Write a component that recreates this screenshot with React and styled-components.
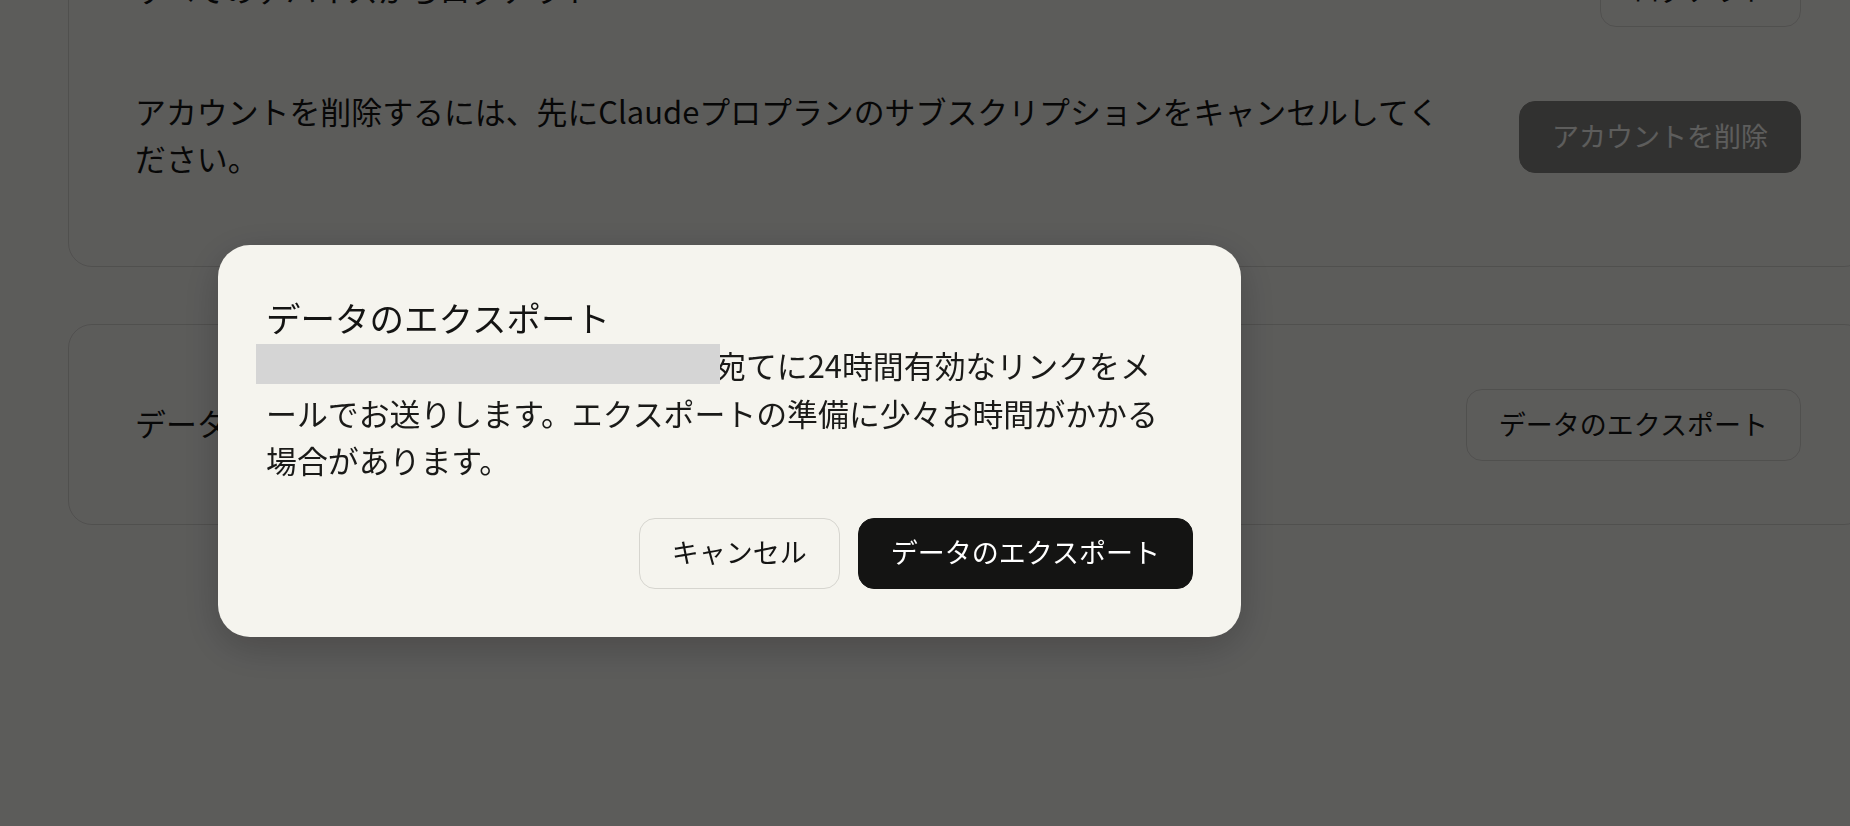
import React from 'react'
import styled, { createGlobalStyle } from 'styled-components'

const GlobalStyle = createGlobalStyle`
    * { box-sizing: border-box; }
    html, body {
        margin: 0;
        padding: 0;
        height: 100%;
        overflow: hidden;
        background: #faf9f5;
    }
    body {
        font-family: "Noto Sans CJK JP", "Noto Sans", sans-serif;
        color: #141413;
    }
`;

// settings page, scrolled down a little
const Page = styled.div`
    width: 1800px;
    margin: -110px 0 0 68px;
    display: flex;
    flex-direction: column;
    gap: 57px;
`;

const Card = styled.section`
    border: 1px solid rgba(31, 30, 29, 0.15);
    border-radius: 24px;
    padding: ${p => p.$pad};
    display: flex;
    flex-direction: column;
    gap: 60px;
`;

const Row = styled.div`
    display: flex;
    align-items: center;
    justify-content: space-between;
    gap: 64px;
    min-height: 72px;
`;

const Label = styled.p`
    margin: 0;
    padding-bottom: 5px;
    font-size: 30.9px;
    line-height: 47px;
    white-space: nowrap;
`;

const OutlineButton = styled.button`
    flex-shrink: 0;
    height: ${p => p.$h || 72}px;
    padding: 0 32px 3px;
    border: 1px solid ${p => p.$border || 'rgba(31, 30, 29, 0.15)'};
    border-radius: 16px;
    background: transparent;
    font-family: inherit;
    font-size: 27px;
    color: #141413;
    white-space: nowrap;
`;

const DarkButton = styled(OutlineButton)`
    border-color: #141413;
    background: #141413;
    color: #ffffff;
    opacity: ${p => (p.disabled ? 0.5 : 1)};
`;

const Backdrop = styled.div`
    position: fixed;
    inset: 0;
    background: rgba(0, 0, 0, 0.63);
    padding: 245px 0 0 218px;
`;

const Dialog = styled.div`
    width: 1023px;
    padding: 48px;
    background: #f5f4ee;
    border-radius: 32px;
    box-shadow: 0 10px 40px rgba(0, 0, 0, 0.22);
`;

const Title = styled.h2`
    margin: 0;
    font-size: 34.5px;
    line-height: 49px;
    font-weight: 400;
    color: #141413;
`;

const Body = styled.p`
    margin: -1px 0 0;
    font-size: 30.9px;
    line-height: 47.5px;
    color: #1a1a18;
    white-space: nowrap;
`;

const Redacted = styled.span`
    position: relative;
    z-index: 1;
    display: inline-block;
    width: 464px;
    height: 40px;
    margin: -14px -5px 0 -10px;
    vertical-align: -6px;
    background: #d5d5d5;
`;

const Actions = styled.div`
    display: flex;
    justify-content: flex-end;
    gap: 18px;
    margin-top: 34px;
`;

export default function App() {
    return (
        <>
            <GlobalStyle />
            <Page>
                <Card $pad="64px 66px 80px">
                    <Row>
                        <Label>すべてのデバイスからログアウト</Label>
                        <OutlineButton>ログアウト</OutlineButton>
                    </Row>
                    <Row>
                        <Label>
                            アカウントを削除するには、先にClaudeプロプランのサブスクリプションをキャンセルしてく
                            <br />
                            ださい。
                        </Label>
                        <DarkButton disabled>アカウントを削除</DarkButton>
                    </Row>
                </Card>
                <Card $pad="64px 66px 63px">
                    <Row>
                        <Label>データのエクスポート</Label>
                        <OutlineButton>データのエクスポート</OutlineButton>
                    </Row>
                </Card>
            </Page>

            <Backdrop>
                <Dialog role="dialog">
                    <Title>データのエクスポート</Title>
                    <Body>
                        <Redacted />宛てに24時間有効なリンクをメ
                        <br />
                        ールでお送りします。エクスポートの準備に少々お時間がかかる
                        <br />
                        場合があります。
                    </Body>
                    <Actions>
                        <OutlineButton $h={71} $border="#d6d5cf">キャンセル</OutlineButton>
                        <DarkButton $h={71}>データのエクスポート</DarkButton>
                    </Actions>
                </Dialog>
            </Backdrop>
        </>
    )
}
